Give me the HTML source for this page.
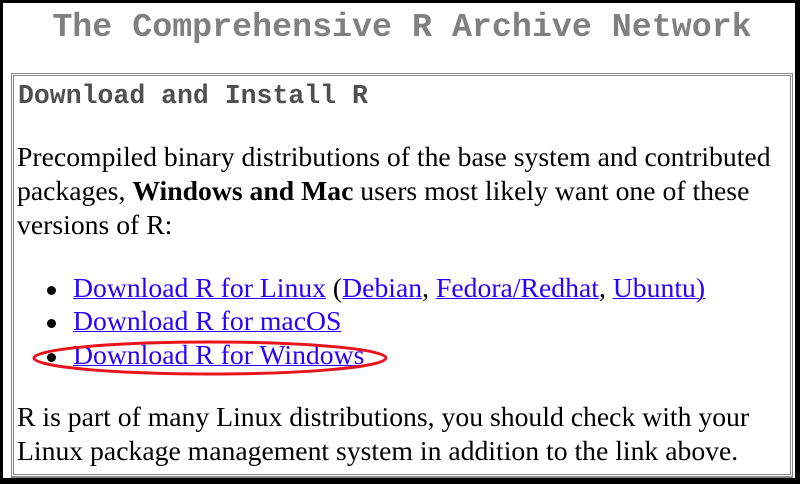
<!DOCTYPE html>
<html><head><style>
html,body{margin:0;padding:0;overflow:hidden;width:800px;height:484px;}
body{position:relative;background:#fff;}
.frame{position:absolute;left:0;top:0;width:792px;height:475px;border-style:solid;border-color:#000;border-width:3px 5px 6px 3px;z-index:2;}
.t{position:absolute;white-space:nowrap;}
.title{font-family:"Liberation Mono",monospace;font-weight:bold;color:#808080;font-size:33.3px;left:2px;width:800px;text-align:center;top:8px;}
.box{position:absolute;left:11px;top:73px;width:776px;height:398px;border:3px double #888;}
.box2{position:absolute;left:11px;top:477px;width:776px;height:2px;border-top:3px double #888;border-left:3px double #888;border-right:3px double #888;}
.h{font-family:"Liberation Mono",monospace;font-weight:bold;color:#505050;font-size:26.5px;left:18px;top:81px;}
.s{font-family:"Liberation Serif",serif;font-size:27.7px;color:#000;left:17px;}
a{color:#2a00ff;text-decoration:underline;text-decoration-thickness:1px;}
.dot{position:absolute;width:9px;height:9px;border-radius:50%;background:#000;}
</style></head><body>
<div class="frame"></div>
<div class="t title">The Comprehensive R Archive Network</div>
<div class="box"></div>
<div class="box2"></div>
<div class="t h">Download and Install R</div>
<div class="t s" style="top:141px">Precompiled binary distributions of the base system and contributed</div>
<div class="t s" style="top:175px">packages, <b>Windows and Mac</b> users most likely want one of these</div>
<div class="t s" style="top:209px">versions of R:</div>
<div class="dot" style="left:47px;top:286px"></div>
<div class="dot" style="left:47px;top:319px"></div>
<div class="dot" style="left:47px;top:353px"></div>
<div class="t s" style="left:73px;top:272px"><a>Download R for Linux</a> (<a>Debian</a>, <a>Fedora/Redhat</a>, <a>Ubuntu)</a></div>
<div class="t s" style="left:73px;top:305px"><a>Download R for macOS</a></div>
<div class="t s" style="left:73px;top:339px"><a>Download R for Windows</a></div>
<svg style="position:absolute;left:0;top:0" width="800" height="484"><ellipse cx="210" cy="358" rx="176" ry="16" fill="none" stroke="#e8141c" stroke-width="3"/></svg>
<div class="t s" style="top:401px">R is part of many Linux distributions, you should check with your</div>
<div class="t s" style="top:435px">Linux package management system in addition to the link above.</div>
</body></html>
